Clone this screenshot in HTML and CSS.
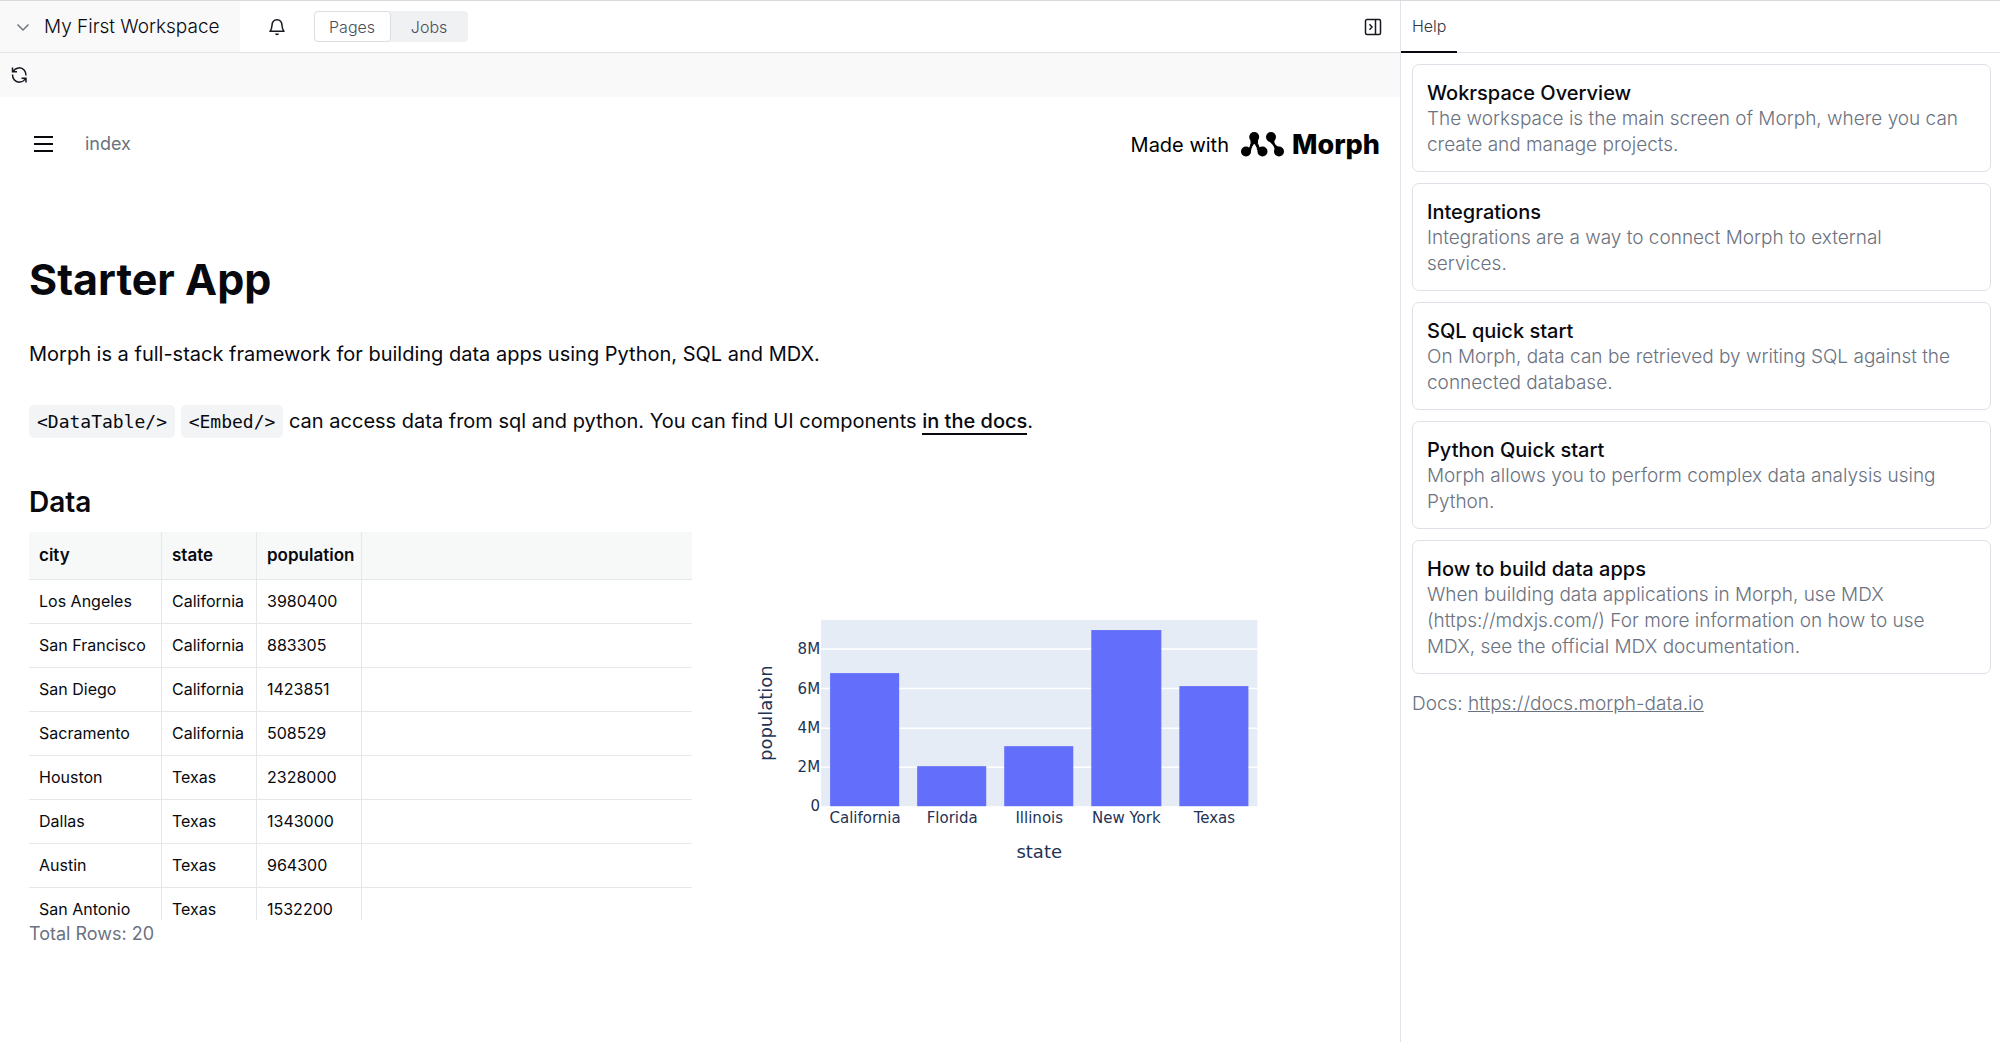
FILE: index.html
```html
<!DOCTYPE html>
<html lang="en">
<head>
<meta charset="utf-8">
<title>My First Workspace - Morph</title>
<link rel="stylesheet" href="styles.css">
</head>
<body>
<div class="app">
  <div class="workspace">
    <header class="topbar">
      <button class="workspace-switch" type="button">
        <svg class="icon" width="14" height="14" viewBox="0 0 14 14" aria-hidden="true"><path d="M1.500 4.500 7 10l5.500-5.500" fill="none" stroke="#71757f" stroke-width="1.500"/></svg>
        <span>My First Workspace</span>
      </button>
      <button class="icon-button bell" type="button" aria-label="Notifications">
        <svg class="icon" width="18" height="18" viewBox="0 0 18 18" aria-hidden="true"><path d="M2 13.200H16C14.600 11.700 14.200 10.600 14 7.500C13.800 3.500 12 1.700 9 1.700S4.200 3.500 4 7.500C3.800 10.600 3.400 11.700 2 13.200z" fill="none" stroke="#16181f" stroke-width="1.500" stroke-linejoin="round"/><path d="M7 15.500h4a2 1.800 0 0 1-4 0z" fill="#16181f"/></svg>
      </button>
      <nav class="segmented" aria-label="Sections">
        <button class="segment active" type="button">Pages</button>
        <button class="segment" type="button">Jobs</button>
      </nav>
      <button class="icon-button collapse" type="button" aria-label="Close panel">
        <svg class="icon" width="18" height="18" viewBox="0 0 18 18" aria-hidden="true"><path d="M3 1.500h12A1.500 1.500 0 0 1 16.500 3v12a1.500 1.500 0 0 1-1.500 1.500H3A1.500 1.500 0 0 1 1.500 15V3A1.500 1.500 0 0 1 3 1.500zM11.500 1.500v15M5.500 6.300 8 9l-2.500 2.700" fill="none" stroke="#16181f" stroke-width="1.500"/></svg>
      </button>
    </header>
    <div class="toolbar">
      <button class="icon-button" type="button" aria-label="Reload">
        <svg class="icon" width="18" height="18" viewBox="0 0 18 18" aria-hidden="true"><path d="M3 5.500C5.500 1 11.500 .8 14.300 4.200C15.600 5.800 16 7.500 16 9.500M15.500 12.500C13 17 7 17.200 4.200 13.800C2.900 12.200 2.500 10.500 2.500 8.500M2.500 1.500v4.300h4.500M16 16.500v-4.300h-4.500" fill="none" stroke="#16181f" stroke-width="1.500"/></svg>
      </button>
    </div>
    <div class="page-head">
      <button class="icon-button menu" type="button" aria-label="Menu">
        <svg class="icon" width="20" height="18" viewBox="0 0 20 18" aria-hidden="true"><path d="M0 2h19M0 9h19M0 16h19" stroke="#08090d" stroke-width="2"/></svg>
      </button>
      <span class="crumb">index</span>
      <a class="made-with" href="#">
        <span>Made with</span>
        <svg class="icon" width="43" height="25" viewBox="0 0 43 25" aria-hidden="true"><path d="M8 20C7.500 15.500 11 13.500 10 8H16.500C15.500 13.500 19.500 14.500 19 20L16.500 18C16.500 14.500 14.500 13 13.200 11C12 13 10 14.500 9.500 19z" stroke="#000" stroke-width="1"/><path d="M34 6.500C31.500 12 36.500 15 39.500 15.500L34 21.500C34.500 16 32 11.500 27 9z"/><circle cx="5" cy="19.500" r="5"/><circle cx="13.200" cy="5" r="5"/><circle cx="21.500" cy="19.500" r="5"/><circle cx="30" cy="5" r="5"/><circle cx="38" cy="19.500" r="5"/></svg>
        <strong class="brand">Morph</strong>
      </a>
    </div>
    <main class="content">
      <h1>Starter App</h1>
      <p>Morph is a full-stack framework for building data apps using Python, SQL and MDX.</p>
      <p><code>&lt;DataTable/&gt;</code> <code>&lt;Embed/&gt;</code> can access data from sql and python. You can find UI components <a class="doc-link" href="#">in the docs</a>.</p>
      <h2>Data</h2>
      <div class="panels">
        <section class="data">
          <div class="table-scroll">
            <table>
              <colgroup><col class="col-city"><col class="col-state"><col class="col-population"><col></colgroup>
              <thead><tr><th>city</th><th>state</th><th>population</th><td></td></tr></thead>
              <tbody>
                <tr><td>Los Angeles</td><td>California</td><td>3980400</td><td></td></tr>
                <tr><td>San Francisco</td><td>California</td><td>883305</td><td></td></tr>
                <tr><td>San Diego</td><td>California</td><td>1423851</td><td></td></tr>
                <tr><td>Sacramento</td><td>California</td><td>508529</td><td></td></tr>
                <tr><td>Houston</td><td>Texas</td><td>2328000</td><td></td></tr>
                <tr><td>Dallas</td><td>Texas</td><td>1343000</td><td></td></tr>
                <tr><td>Austin</td><td>Texas</td><td>964300</td><td></td></tr>
                <tr><td>San Antonio</td><td>Texas</td><td>1532200</td><td></td></tr>
              </tbody>
            </table>
          </div>
          <p class="total">Total Rows: 20</p>
        </section>
        <svg class="chart" viewBox="0 0 662 388" role="img" aria-label="Population by state">
          <rect x="111" y="88" width="436" height="186" fill="#e5ecf6"/>
          <path d="M111 117h436M111 156.500h436M111 196h436M111 235h436" stroke="#fff" stroke-width="1.500"/>
          <g fill="#636efa">
            <rect x="120" y="141" width="69" height="133"/>
            <rect x="207" y="234" width="69" height="40"/>
            <rect x="294" y="214" width="69" height="60"/>
            <rect x="381" y="98" width="70" height="176"/>
            <rect x="469" y="154" width="69" height="120"/>
          </g>
          <g class="tick" text-anchor="end">
            <text x="110" y="122">8M</text>
            <text x="110" y="162">6M</text>
            <text x="110" y="201">4M</text>
            <text x="110" y="240">2M</text>
            <text x="110" y="279">0</text>
          </g>
          <g class="tick" text-anchor="middle">
            <text x="155" y="291">California</text>
            <text x="242" y="291">Florida</text>
            <text x="329" y="291">Illinois</text>
            <text x="416" y="291">New York</text>
            <text x="504" y="291">Texas</text>
          </g>
          <text class="axis" x="329" y="326" text-anchor="middle">state</text>
          <text class="axis" transform="translate(62 181) rotate(-90)" text-anchor="middle">population</text>
        </svg>
      </div>
    </main>
  </div>
  <aside class="help">
    <nav class="tabs"><button class="tab" type="button">Help</button></nav>
    <div class="help-body">
      <article class="card"><h3>Wokrspace Overview</h3><p>The workspace is the main screen of Morph, where you can create and manage projects.</p></article>
      <article class="card"><h3>Integrations</h3><p>Integrations are a way to connect Morph to external services.</p></article>
      <article class="card"><h3>SQL quick start</h3><p>On Morph, data can be retrieved by writing SQL against the connected database.</p></article>
      <article class="card"><h3>Python Quick start</h3><p>Morph allows you to perform complex data analysis using Python.</p></article>
      <article class="card"><h3>How to build data apps</h3><p>When building data applications in Morph, use MDX (https://mdxjs.com/) For more information on how to use MDX, see the official MDX documentation.</p></article>
      <p class="docs">Docs: <a href="#">https://docs.morph-data.io</a></p>
    </div>
  </aside>
</div>
</body>
</html>
```
FILE: styles.css
```css
* { box-sizing: border-box; }
body {
  margin: 0;
  background: #fff;
  color: #08090f;
  font-family: Inter, "Liberation Sans", sans-serif;
  font-size: 20px;
}
h1, h2, h3, p { margin: 0; }
button {
  margin: 0;
  padding: 0;
  border: 0;
  background: none;
  color: inherit;
  font: inherit;
}
.icon { display: block; flex: none; }
.icon-button { display: flex; }

.app {
  display: flex;
  min-height: 100vh;
  border-top: 1px solid #d9d9db;
}
.workspace { flex: 1; min-width: 0; }

.topbar {
  display: flex;
  align-items: center;
  height: 52px;
  border-bottom: 1px solid #e2e3e6;
}
.workspace-switch {
  display: flex;
  align-items: center;
  align-self: stretch;
  gap: 14px;
  padding: 0 20px 0 16px;
  background: #f9f9fa;
  font-size: 19px;
  font-weight: 300;
}
.bell { margin: 0 28px; }
.segmented {
  display: flex;
  border-radius: 4px;
  background: #f0f1f3;
  color: #4b4f58;
  font-size: 16px;
  font-weight: 300;
}
.segment {
  width: 77px;
  height: 31px;
  border: 1px solid transparent;
  border-radius: 4px;
}
.segment.active { border-color: #dcdee2; background: #fff; }
.collapse { margin-left: auto; padding-right: 18px; }

.toolbar {
  display: flex;
  align-items: center;
  height: 44px;
  padding: 0 10px;
  background: #f9f9fa;
}

.page-head {
  display: flex;
  align-items: center;
  height: 93px;
  padding: 0 20px 0 34px;
}
.crumb { margin-left: 31px; color: #6b7280; font-size: 18px; }
.made-with {
  display: flex;
  align-items: center;
  gap: 8px;
  margin-left: auto;
  padding-top: 2px;
  color: #000;
  text-decoration: none;
}
.made-with .icon { margin-left: 4px; }
.brand { font-size: 27px; font-weight: 800; }

.content { padding: 57px 28px 0 29px; }
h1 { font-size: 43px; line-height: 64px; }
.content > p { line-height: 36px; }
h1 + p { margin-top: 25px; }
p + p { margin-top: 31px; }
code {
  padding: 6px 8px;
  border-radius: 5px;
  background: #f3f4f6;
  font-family: "DejaVu Sans Mono", monospace;
  font-size: 18px;
}
.doc-link {
  border-bottom: 2px solid #08090f;
  color: inherit;
  font-weight: 500;
  text-decoration: none;
}
h2 { margin-top: 44px; font-size: 28px; font-weight: 600; line-height: 36px; }

.panels {
  display: grid;
  grid-template-columns: 1fr 1fr;
  align-items: start;
  gap: 18px;
  margin-top: 12px;
}
.table-scroll { height: 388px; overflow: hidden; }
table {
  width: 100%;
  border-collapse: separate;
  border-spacing: 0;
  table-layout: fixed;
  font-size: 16px;
}
.col-city { width: 133px; }
.col-state { width: 95px; }
.col-population { width: 105px; }
th, td {
  height: 44px;
  padding: 0 0 2px 10px;
  border-right: 1px solid #e5e7eb;
  border-bottom: 1px solid #e5e7eb;
  text-align: left;
  white-space: nowrap;
}
thead th, thead td { height: 48px; background: #f7f8f8; font-size: 17px; font-weight: 600; }
tr > :last-child { border-right: 0; }
.total { color: #6b7280; font-size: 18px; line-height: 28px; }
.chart { display: block; width: 100%; }
.chart text { fill: #1f3354; font-family: "DejaVu Sans", sans-serif; }
.chart .tick { font-size: 15px; }
.chart .axis { font-size: 18px; }

.help {
  width: 30%;
  border-left: 1px solid #e2e3ea;
  font-size: 19px;
  font-weight: 300;
  line-height: 26px;
}
.tabs { display: flex; height: 52px; border-bottom: 1px solid #e2e3ea; }
.tab {
  height: 52px;
  padding: 0 11px;
  border-bottom: 2px solid #08090f;
  color: #33363f;
  font-size: 16px;
}
.help-body { display: grid; gap: 11px; padding: 11px 9px 0 11px; }
.card {
  padding: 15px 26px 13px 14px;
  border: 1px solid #dfe1e8;
  border-radius: 7px;
  color: #6b7280;
}
.card h3 { color: #08090f; font-size: 20px; font-weight: 500; line-height: 26px; }
.docs { margin-top: 6px; color: #6b7280; }
.docs a { color: inherit; }
```
